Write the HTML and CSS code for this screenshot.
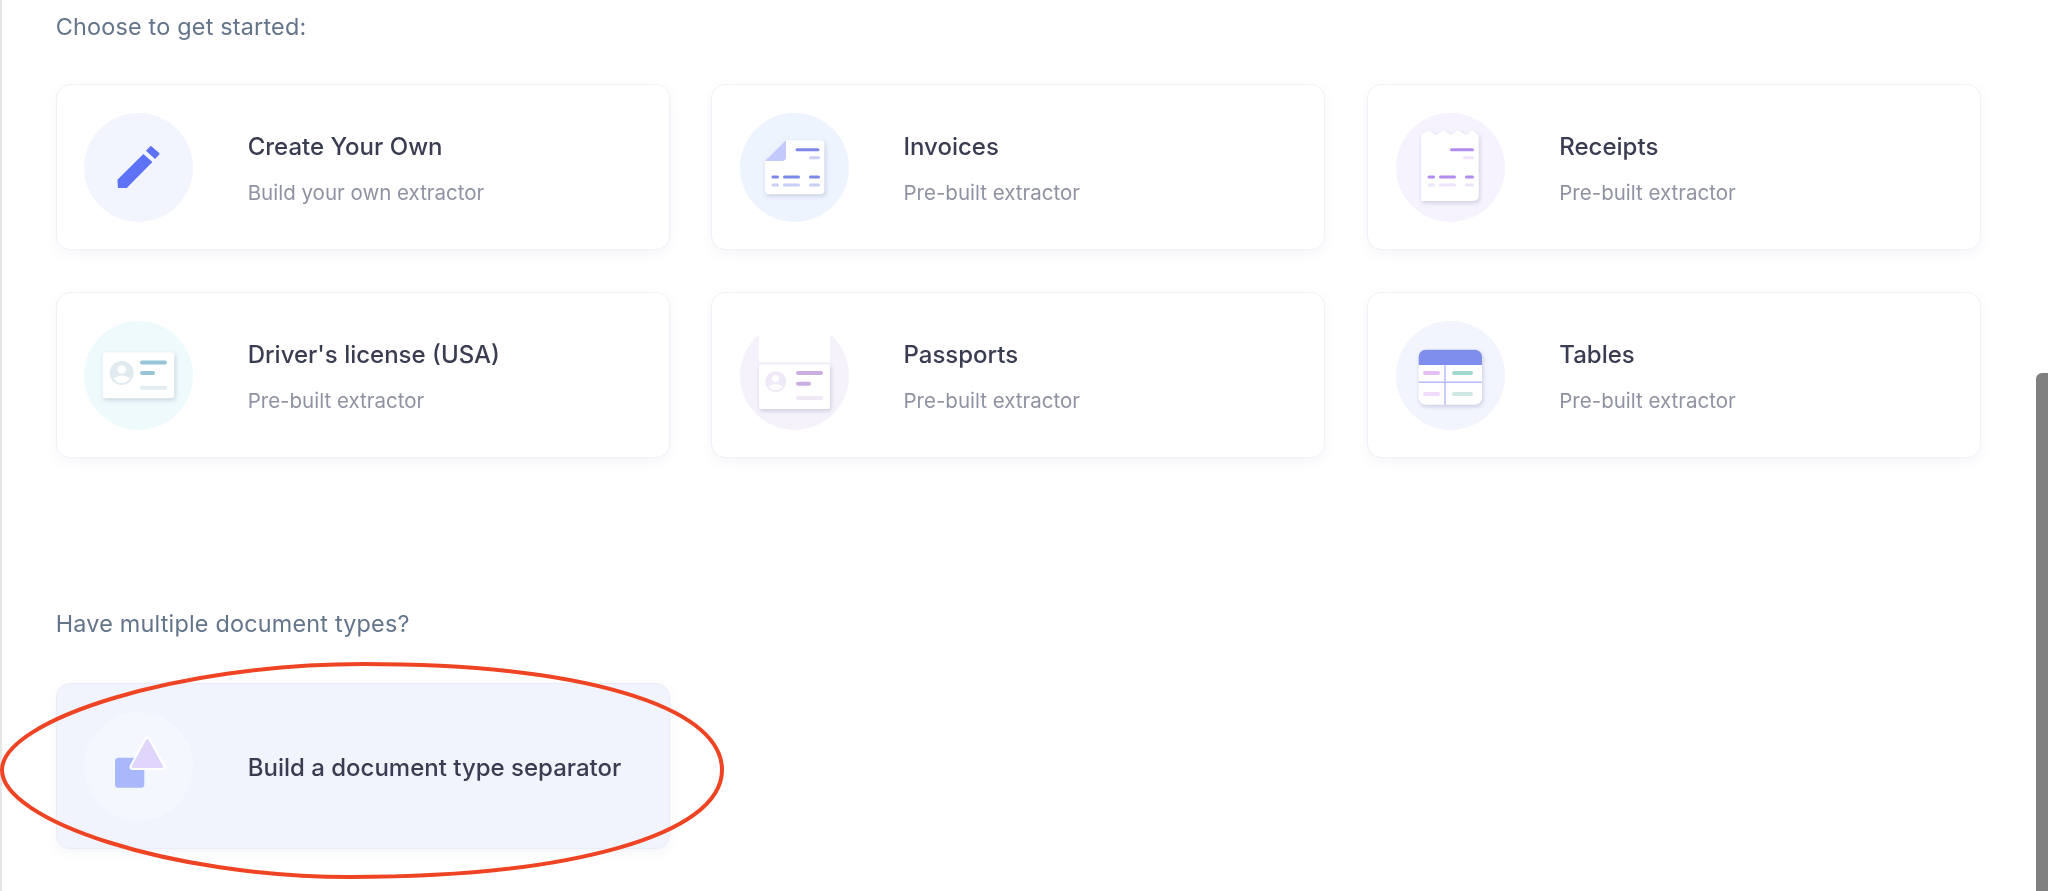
FILE: index.html
```html
<!DOCTYPE html>
<html lang="en">
<head>
<meta charset="utf-8">
<title>Choose to get started</title>
<link rel="stylesheet" href="styles.css">
</head>
<body>
<main class="page">
  <h2 class="heading heading-first">Choose to get started:</h2>
  <section class="grid">
    <article class="card">
      <div class="disc disc-blue">
        <svg class="art" viewBox="0 0 109 109"><path d="M33.400 66.700 59.400 41l9 8-25.700 26H34z" fill="#5d72f6"/><path d="M62 37.700l4-4.300q.8-.8 1.700 0l7.500 6.600q.8.800 0 1.700L71 46z" fill="#5d72f6"/></svg>
      </div>
      <div class="copy"><h3 class="title">Create Your Own</h3><p class="sub">Build your own extractor</p></div>
    </article>
    <article class="card">
      <div class="disc disc-sky">
        <svg class="art" viewBox="0 0 109 109">
          <path class="shadowed" d="M46 27.300h34.300a4 4 0 0 1 4 4v46a4 4 0 0 1-4 4H29a4 4 0 0 1-4-4V48z" fill="#fff"/>
          <path d="M46 27.300V44a4 4 0 0 1-4 4H25z" fill="#c3cafb"/>
          <g stroke-width="3" stroke-linecap="round" fill="none">
            <path stroke="#7c89e8" d="M57 36.700h21M33 64h4.500M44.500 64h14M70.500 64h8"/>
            <path stroke="#c9cff7" d="M70.500 44.700h8M33 72h4.500M44.500 72h14M70.500 72h8"/>
          </g>
        </svg>
      </div>
      <div class="copy"><h3 class="title">Invoices</h3><p class="sub">Pre-built extractor</p></div>
    </article>
    <article class="card">
      <div class="disc disc-violet">
        <svg class="art" viewBox="0 0 109 109">
          <path class="shadowed" d="M25 21.500 33 17.300 40 22.300 48 17.300 55 22.300 62 17.300 70 22.300 76 17.300 82.700 22v61a5 5 0 0 1-5 5H25z" fill="#fff"/>
          <g stroke-width="3" stroke-linecap="round" fill="none">
            <path stroke="#b08cf0" d="M55.500 36.700h21M33 64h4.500M44.500 64h14M70.500 64h6"/>
            <path stroke="#ede6fb" d="M68.500 44.700h8M33 72h4.500M44.500 72h14M70.500 72h6"/>
          </g>
        </svg>
      </div>
      <div class="copy"><h3 class="title">Receipts</h3><p class="sub">Pre-built extractor</p></div>
    </article>
    <article class="card">
      <div class="disc disc-aqua">
        <svg class="art" viewBox="0 0 109 109">
          <rect class="shadowed" x="18.700" y="31.300" width="71.600" height="46" rx="3" fill="#fff"/>
          <circle cx="37.700" cy="52" r="12" fill="#e1ebef"/>
          <circle cx="37.700" cy="48.500" r="4.200" fill="#fff"/>
          <path d="M29.500 57.500q8.200-6 16.400 0-3.500 4.500-8.200 4.500t-8.200-4.500z" fill="#fff"/>
          <g stroke-width="4" stroke-linecap="round" fill="none">
            <path stroke="#97c4d6" d="M58 41.500h23M58 52h11"/>
            <path stroke="#e3ecf0" d="M58 66.700h23"/>
          </g>
        </svg>
      </div>
      <div class="copy"><h3 class="title">Driver's license (USA)</h3><p class="sub">Pre-built extractor</p></div>
    </article>
    <article class="card">
      <div class="disc disc-lilac">
        <svg class="art art-open" viewBox="0 0 109 109">
          <path d="M19 0h71v39a2 2 0 0 1-2 2H21a2 2 0 0 1-2-2z" fill="#fff"/>
          <rect class="shadowed" x="19" y="43.300" width="71" height="44.700" rx="2" fill="#fff"/>
          <circle cx="35.700" cy="60.700" r="10.500" fill="#f0e9f8"/>
          <circle cx="35.700" cy="57.500" r="3.600" fill="#fff"/>
          <path d="M28.500 65.500q7.200-5 14.400 0-3 3.700-7.200 3.700t-7.200-3.700z" fill="#fff"/>
          <g stroke-width="4" stroke-linecap="round" fill="none">
            <path stroke="#c9aee0" d="M58 52h23M58 62.700h11"/>
            <path stroke="#efe7f6" d="M58 77h23"/>
          </g>
        </svg>
      </div>
      <div class="copy"><h3 class="title">Passports</h3><p class="sub">Pre-built extractor</p></div>
    </article>
    <article class="card">
      <div class="disc disc-periwinkle">
        <svg class="art" viewBox="0 0 109 109">
          <rect class="shadowed" x="22.700" y="28.700" width="63.300" height="55" rx="7" fill="#fff"/>
          <path d="M22.700 44V35.700a7 7 0 0 1 7-7H79a7 7 0 0 1 7 7V44z" fill="#7f8eec"/>
          <path d="M49 44v39.700M22.700 61.300H86" stroke="#b6befa" stroke-width="1.500" fill="none"/>
          <g stroke-width="4" stroke-linecap="round" fill="none">
            <path stroke="#e3bff6" d="M29 52h13"/>
            <path stroke="#a2d9ce" d="M58 52h17"/>
            <path stroke="#f1ddfb" d="M29 73h13"/>
            <path stroke="#cfe8e3" d="M58 73h17"/>
          </g>
        </svg>
      </div>
      <div class="copy"><h3 class="title">Tables</h3><p class="sub">Pre-built extractor</p></div>
    </article>
  </section>
  <h2 class="heading heading-second">Have multiple document types?</h2>
  <section class="grid">
    <article class="card card-active">
      <div class="disc disc-pale">
        <svg class="art" viewBox="0 0 109 109">
          <rect x="31" y="45.700" width="29.300" height="30" rx="3.500" fill="#a9b8fa"/>
          <path d="M63.300 27.500 78.500 55H48.500z" fill="#e0d6fb" stroke="#fff" stroke-width="6" stroke-linejoin="round"/>
          <path d="M63.300 28 78 54.700H48.700z" fill="#e0d6fb" stroke="#e0d6fb" stroke-width="2.500" stroke-linejoin="round"/>
        </svg>
      </div>
      <div class="copy"><h3 class="title">Build a document type separator</h3></div>
    </article>
  </section>
</main>
<svg class="annotation" viewBox="0 0 730 225" aria-hidden="true"><path d="M2 110C2 60 178 4 363 4 578 4 722 45 722 110 722 175 570 217 350 217 170 217 2 160 2 110z" fill="none" stroke="#ee4423" stroke-width="4"/></svg>
<div class="scroll-thumb"></div>
</body>
</html>
```
FILE: styles.css
```css
* { box-sizing: border-box; }
html, body { margin: 0; height: 891px; overflow: hidden; background: #fff; }
body { position: relative; font-family: Inter, "Liberation Sans", sans-serif; }
.page {
  width: 2048px;
  height: 891px;
  padding: 0 66px 0 53.700px;
  border-left: 2px solid #e6e6e6;
  filter: blur(0.35px);
}
.heading {
  margin: 0;
  font-size: 23.400px;
  line-height: 28px;
  font-weight: 400;
  color: #64748b;
  letter-spacing: 0.2px;
}
.heading-first { padding-top: 13px; margin-bottom: 43px; }
.heading-second { margin-top: 152px; margin-bottom: 45px; }
.grid {
  display: grid;
  grid-template-columns: repeat(3, 614px);
  grid-auto-rows: 166px;
  gap: 42px 41.800px;
}
.card {
  display: flex;
  align-items: center;
  gap: 54.500px;
  padding-left: 27.500px;
  background: #fff;
  border: 1px solid #f0f1f6;
  border-radius: 14px;
  box-shadow: 0 4px 12px rgba(100, 110, 160, 0.07);
}
.card-active { background: #f1f4fd; border-color: #e9edf8; }
.disc { flex: none; width: 109px; height: 109px; border-radius: 50%; }
.disc-blue { background: #f2f5fe; }
.disc-sky { background: #edf4fe; }
.disc-violet { background: #f6f3fe; }
.disc-aqua { background: #effafc; }
.disc-lilac { background: #f5f2fb; }
.disc-periwinkle { background: #f2f4fe; }
.disc-pale { background: #f4f7fe; }
.art { display: block; width: 109px; height: 109px; overflow: visible; }
.shadowed { filter: drop-shadow(1px 2px 2px rgba(70, 70, 120, 0.22)); }
.copy { display: flex; flex-direction: column; gap: 19px; padding-top: 4px; }
.title {
  margin: 0;
  font-size: 24px;
  line-height: 28px;
  font-weight: 500;
  color: #3a3d52;
}
.sub {
  margin: 0;
  font-size: 20.500px;
  line-height: 25px;
  font-weight: 400;
  color: #8f92a3;
}
.annotation {
  position: absolute;
  left: 0;
  top: 660px;
  width: 730px;
  height: 225px;
}
.scroll-thumb {
  position: absolute;
  right: 0;
  top: 373px;
  bottom: 0;
  width: 12px;
  background: #808080;
  border-radius: 6px 0 0 0;
}
```
